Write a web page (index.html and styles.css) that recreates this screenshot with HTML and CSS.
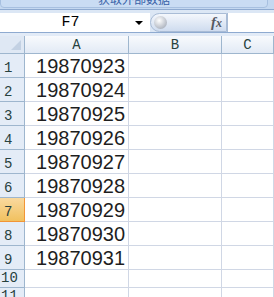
FILE: index.html
```html
<!DOCTYPE html>
<html lang="zh-CN">
<head>
  <meta charset="UTF-8" />
  <title>Sheet1</title>
  <link rel="stylesheet" href="styles.css">
</head>
<body>
  <div class="ribbon">
    <div class="group-label">获取外部数据</div>
  </div>

  <div class="fbar">
    <div class="namebox">
      <span class="name">F7</span>
      <span class="drop"></span>
    </div>
    <div class="fxbtn">
      <span class="knob"></span>
      <span class="fx">f<small>x</small></span>
    </div>
    <div class="finput"></div>
  </div>

  <div class="sheet">
    <div class="row head">
      <div class="corner"><span class="tri"></span></div>
      <div class="cell ch a">A</div>
      <div class="cell ch b">B</div>
      <div class="cell ch c">C</div>
    </div>
    <div class="row"><div class="rh">1</div><div class="cell a num">19870923</div><div class="cell b"></div><div class="cell c"></div></div>
    <div class="row"><div class="rh">2</div><div class="cell a num">19870924</div><div class="cell b"></div><div class="cell c"></div></div>
    <div class="row"><div class="rh">3</div><div class="cell a num">19870925</div><div class="cell b"></div><div class="cell c"></div></div>
    <div class="row"><div class="rh">4</div><div class="cell a num">19870926</div><div class="cell b"></div><div class="cell c"></div></div>
    <div class="row"><div class="rh">5</div><div class="cell a num">19870927</div><div class="cell b"></div><div class="cell c"></div></div>
    <div class="row"><div class="rh">6</div><div class="cell a num">19870928</div><div class="cell b"></div><div class="cell c"></div></div>
    <div class="row"><div class="rh active">7</div><div class="cell a num">19870929</div><div class="cell b"></div><div class="cell c"></div></div>
    <div class="row"><div class="rh">8</div><div class="cell a num">19870930</div><div class="cell b"></div><div class="cell c"></div></div>
    <div class="row"><div class="rh">9</div><div class="cell a num">19870931</div><div class="cell b"></div><div class="cell c"></div></div>
    <div class="row short"><div class="rh">10</div><div class="cell a"></div><div class="cell b"></div><div class="cell c"></div></div>
    <div class="row short"><div class="rh">11</div><div class="cell a"></div><div class="cell b"></div><div class="cell c"></div></div>
  </div>
</body>
</html>
```

FILE: styles.css
```css
* {
  margin: 0;
  padding: 0;
  box-sizing: border-box;
}

body {
  width: 274px;
  height: 297px;
  overflow: hidden;
  background: #ffffff;
  font-family: 'Liberation Sans', Arial, sans-serif;
}

/* ribbon strip at the top */
.ribbon {
  height: 10px;
  background: #c4d8f0;
  border-bottom: 1px solid #8eaad0;
  position: relative;
  overflow: hidden;
}

.group-label {
  position: absolute;
  left: 0;
  right: 6px;
  top: -11px;
  height: 19px;
  background: #c9dcf3;
  border: 1px solid #a7c0e0;
  border-radius: 0 0 4px 4px;
  text-align: center;
  font-family: 'Noto Sans CJK SC', sans-serif;
  font-size: 12px;
  line-height: 17px;
  color: #3a63a8;
}

/* formula bar */
.fbar {
  display: flex;
  height: 26px;
  padding-top: 3px;
  background: #dce7f5;
  border-bottom: 3px solid #e2ebf7;
  box-shadow: inset 0 -1px 0 #8eaad0;
}

.namebox {
  width: 150px;
  height: 19px;
  background: #ffffff;
  display: flex;
  align-items: center;
}

.name {
  flex: 1;
  text-align: center;
  font-family: 'Liberation Mono', monospace;
  font-size: 15px;
  color: #000000;
  padding-left: 6px;
}

.drop {
  width: 0;
  height: 0;
  border-left: 4px solid transparent;
  border-right: 4px solid transparent;
  border-top: 4px solid #000000;
  margin-right: 7px;
}

.fxbtn {
  width: 77px;
  height: 19px;
  background: linear-gradient(#f4f7fc, #cfdcef);
  border: 1px solid #a9bcd6;
  border-radius: 10px 0 0 10px;
  display: flex;
  align-items: center;
  justify-content: space-between;
  padding: 0 4px 0 3px;
}

.knob {
  width: 13px;
  height: 13px;
  border-radius: 50%;
  background: radial-gradient(circle at 40% 35%, #ffffff, #b4bac4 70%, #8f97a4);
}

.fx {
  font-family: 'Liberation Serif', serif;
  font-style: italic;
  font-weight: bold;
  font-size: 15px;
  color: #555a63;
}

.fx small {
  font-size: 12px;
}

.finput {
  flex: 1;
  height: 19px;
  background: #ffffff;
  border-left: 1px solid #a9bcd6;
}

/* grid */
.sheet {
  display: flex;
  flex-direction: column;
}

.row {
  display: flex;
  height: 24px;
}

.row.short,
.row.head {
  height: 18px;
}

.corner {
  width: 25px;
  background: #dfe8f4;
  border-right: 1px solid #9eb6ce;
  border-bottom: 1px solid #9eb6ce;
  position: relative;
}

.tri {
  position: absolute;
  right: 3px;
  bottom: 3px;
  width: 0;
  height: 0;
  border-left: 10px solid transparent;
  border-bottom: 10px solid #c3d1e3;
}

.cell {
  border-right: 1px solid #d0d7e5;
  border-bottom: 1px solid #d0d7e5;
}

.cell.a { width: 104px; }
.cell.b { width: 93px; }
.cell.c { flex: 1; }

.ch {
  background: linear-gradient(#f8fafd, #e2eaf5);
  border-right-color: #9eb6ce;
  border-bottom-color: #9eb6ce;
  text-align: center;
  font-family: 'Liberation Mono', monospace;
  font-size: 14px;
  line-height: 19px;
  color: #27413e;
}

.rh {
  width: 25px;
  background: #e4ecf7;
  border-right: 1px solid #9eb6ce;
  border-bottom: 1px solid #9eb6ce;
  font-family: 'Liberation Mono', monospace;
  font-size: 14px;
  line-height: 16px;
  color: #27413e;
  display: flex;
  align-items: flex-end;
  padding-left: 4px;
  padding-bottom: 1px;
}

.row.short .rh {
  padding-left: 1px;
  font-size: 14px;
}

.rh.active {
  background: linear-gradient(#f9d99f, #f1c15f);
  border-right-color: #f29536;
  border-bottom-color: #f29536;
}

.num {
  text-align: right;
  font-size: 20px;
  line-height: 22px;
  padding-top: 1px;
  padding-right: 3px;
  color: #1e1e1e;
}
```
